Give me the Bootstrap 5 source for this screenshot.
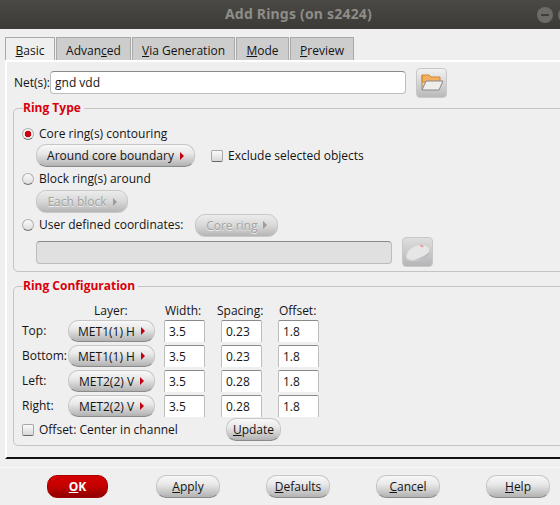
<!DOCTYPE html>
<html lang="en">
<head>
  <meta charset="UTF-8">
  <title>Add Rings (on s2424)</title>
  <meta name="viewport" content="width=device-width, initial-scale=1">
  <link href="https://cdn.jsdelivr.net/npm/bootstrap@5.3.3/dist/css/bootstrap.min.css" rel="stylesheet">
  <style>
    html, body { height: 100%; overflow: hidden; background: #efefef; }
    body { font-family: "Open Sans", "Noto Sans", sans-serif; font-size: 12px; line-height: 16px; color: #141414; }
    .win { width: 560px; height: 505px; overflow: hidden; }
    .inner { width: 597px; }
    .titlebar { height: 29px; background: linear-gradient(#4a4944, #3b3a36); color: #8e8d88; font: bold 14px/27px "Noto Sans", sans-serif; letter-spacing: .2px; text-align: center; position: relative; }
    .winbtn { position: absolute; top: 7px; width: 16px; height: 16px; border-radius: 50%; background: #6c6b66; }
    .winbtn::after { content: ""; position: absolute; left: 4px; right: 4px; top: 7px; height: 2px; background: #403f3b; }
    .tabbar { padding: 8px 0 0 5px; height: 31px; gap: 1px; border: 0; flex-wrap: nowrap; }
    .tabitem { height: 23px; padding: 5px 0 0; text-align: center; background: #cdcdcd; border: 1px solid #a9a9a9; border-bottom: 0; color: #141414; }
    .tabitem.on { background: #efefef; }
    .tabpane { margin-left: 5px; border-top: 2px solid #fff; border-left: 2px solid #fff; border-bottom: 2px solid #111; padding: 5px 0 0 6px; box-sizing: content-box; height: 390px; }
    .netrow { height: 31px; margin-bottom: 2px; }
    .netlabel { width: 37px; padding-left: 1px; }
    .netinput { width: 356px; height: 23px; }
    .field { border: 1px solid #c4c4c4; border-radius: 5px; padding: 0 0 0 8px; margin: 0; }
    .field legend { float: none; width: auto; font-size: 12px; line-height: 16px; font-weight: 700; color: #d8000c; margin: 0 0 0 1px; padding: 0 3px 0 0; }
    .typebox { height: 172px; }
    .confbox { height: 168px; margin-top: 6px; }
    .gbtn { height: 23px; padding: 0; font-size: 12px; line-height: 21px; color: #141414; border: 1px solid #c6c6c6; border-bottom-color: #8a8a8a; border-radius: 10px; background: linear-gradient(#f8f8f8, #e8e8e8 40%, #b2b2b2); display: inline-flex; align-items: center; justify-content: center; gap: 6px; }
    .gbtn:disabled { opacity: 1; color: #a2a2a2; background: linear-gradient(#ececec, #d8d8d8 50%, #b5b5b5); border-color: #c8c8c8; text-shadow: 0 1px 0 #eee; }
    .arrow { width: 0; height: 0; border-left: 4px solid #c00010; border-top: 4px solid transparent; border-bottom: 4px solid transparent; }
    .gbtn:disabled .arrow { border-left-color: #9c9c9c; }
    .okbtn { width: 62px; color: #fff; font-weight: 700; background: linear-gradient(#d40000, #c40000 50%, #8e0000); border-color: #a00; }
    .iconbtn { width: 31px; height: 30px; margin-left: 10px; border: 1px solid #c8c8c8; border-radius: 4px; background: linear-gradient(#f2f2f2, #b9b9b9); padding: 0; }
    .iconbtn.dim { background: linear-gradient(#dedede, #b5b5b5); }
    .form-check-input.tick { width: 12px; height: 12px; margin: 0; flex: none; border: 1px solid #a8a8a8; background-image: none; background-color: #e9e9e9; float: none; }
    .form-check-input.tick[type=radio] { background: linear-gradient(#fafafa, #dcdcdc); border-radius: 50%; border-color: #b0b0b0 #b0b0b0 #777; }
    .form-check-input.tick[type=radio]:checked { background: radial-gradient(circle, #c80010 0 3px, #f2f2f2 3.6px); }
    .form-check-input.tick[type=checkbox] { border-radius: 2px; background: linear-gradient(#fafafa, #d8d8d8); border-bottom-color: #666; }
    .optline { height: 22px; }
    .optline span { margin-left: 5px; }
    .indent { padding-left: 14px; }
    .nm { width: 46px; flex: none; }
    .numbox { width: 41px; height: 22px; border: 1px solid #bdbdbd; border-bottom: 0; border-top-color: #8a8a8a; border-radius: 2px 2px 0 0; background: #fff; padding: 0 4px; font-size: 12px; color: #141414; }
    .textbox { border: 1px solid #bdbdbd; border-top-color: #8a8a8a; border-radius: 4px; background: #fff; padding: 0 4px; font-size: 12px; color: #141414; }
    .cfgrow { height: 22px; margin-bottom: 3px; }
    .cfgrow .gbtn { width: 87px; height: 22px; margin-right: 9px; }
    .cfgrow .numbox { margin-right: 16px; }
    .heads { display: grid; grid-template-columns: 72px 71px 52px 62px auto; height: 17px; margin-top: 9px; }
    .footbar { border-top: 1px solid #fafafa; margin-top: 8px; padding: 7px 0 0 47px; }
    .footbar .gbtn { width: 64px; margin-right: 46px; }
    .footbar .okbtn { width: 61px; margin-right: 48px; }
  </style>
</head>
<body>
  <div class="win">
    <div class="inner">
      <div class="titlebar">Add Rings (on s2424)
        <span class="winbtn" style="left:537px"></span>
        <span class="winbtn" style="left:558px"></span>
      </div>

      <ul class="nav tabbar">
        <li class="nav-item tabitem on" style="width:50px"><u>B</u>asic</li>
        <li class="nav-item tabitem" style="width:75px">Advan<u>c</u>ed</li>
        <li class="nav-item tabitem" style="width:103px"><u>V</u>ia Generation</li>
        <li class="nav-item tabitem" style="width:53px"><u>M</u>ode</li>
        <li class="nav-item tabitem" style="width:64px"><u>P</u>review</li>
      </ul>

      <div class="tabpane">
        <div class="d-flex align-items-center netrow">
          <span class="netlabel">Net(s):</span>
          <input class="textbox netinput" value="gnd vdd">
          <button class="iconbtn">
            <svg width="26" height="22" viewBox="0 0 26 22">
              <path d="M3 3h7l2 2h9v5H3z" fill="#f2b060" stroke="#d08a30"/>
              <path d="M3 3v15" stroke="#d08a30" fill="none"/>
              <path d="M7 9h17l-4 9H3z" fill="#f0eeea" stroke="#8a8a8a"/>
            </svg>
          </button>
        </div>

        <fieldset class="field typebox">
          <legend>Ring Type</legend>
          <div class="d-flex align-items-center optline" style="margin-top:7px">
            <input class="form-check-input tick" type="radio" name="ring" checked>
            <span>Core ring(s) contouring</span>
          </div>
          <div class="d-flex align-items-center indent" style="margin-top:-1px">
            <button class="btn gbtn" style="width:159px">Around core boundary <i class="arrow"></i></button>
            <input class="form-check-input tick" style="margin-left:16px" type="checkbox">
            <span style="margin-left:5px">Exclude selected objects</span>
          </div>
          <div class="d-flex align-items-center optline" style="margin-top:1px">
            <input class="form-check-input tick" type="radio" name="ring">
            <span>Block ring(s) around</span>
          </div>
          <div class="indent" style="height:23px">
            <button class="btn gbtn" style="width:92px" disabled>Each block <i class="arrow"></i></button>
          </div>
          <div class="d-flex align-items-center optline" style="height:24px">
            <input class="form-check-input tick" type="radio" name="ring">
            <span>User defined coordinates:</span>
            <button class="btn gbtn" style="width:83px;margin-left:12px" disabled>Core ring <i class="arrow"></i></button>
          </div>
          <div class="d-flex align-items-center indent">
            <input class="textbox" style="width:356px;height:23px;background:#e0e0e0" disabled>
            <button class="iconbtn dim" disabled>
              <svg width="28" height="24" viewBox="0 0 26 22">
                <path d="M2 15c0-6 7-11 14-11 5 0 8 2 8 5 0 6-9 10-15 10-4 0-7-1-7-4z" fill="#e6e6e6" stroke="#d0d0d0"/>
                <path d="M10 18c5-1 11-4 14-8 0 5-8 9-14 8z" fill="#b4bac2"/>
                <path d="M15 5l3 1" stroke="#e99" stroke-width="1.5"/>
              </svg>
            </button>
          </div>
        </fieldset>

        <fieldset class="field confbox">
          <legend>Ring Configuration</legend>
          <div class="heads">
            <span></span>
            <span>Layer:</span>
            <span>Width:</span>
            <span>Spacing:</span>
            <span>Offset:</span>
          </div>
          <div id="cfgRows"></div>
          <div class="d-flex align-items-center" style="margin-top:-2px">
            <input class="form-check-input tick" type="checkbox">
            <span style="margin-left:5px;width:187px">Offset: Center in channel</span>
            <button class="btn gbtn" style="width:55px"><span><u>U</u>pdate</span></button>
          </div>
        </fieldset>
      </div>

      <div class="footbar d-flex">
        <button class="btn gbtn okbtn"><span><u>O</u>K</span></button>
        <button class="btn gbtn"><span><u>A</u>pply</span></button>
        <button class="btn gbtn"><span><u>D</u>efaults</span></button>
        <button class="btn gbtn"><span><u>C</u>ancel</span></button>
        <button class="btn gbtn"><span><u>H</u>elp</span></button>
      </div>
    </div>
  </div>

  <script>
    const rows = [
      ["Top:", "MET1(1) H", "0.23"],
      ["Bottom:", "MET1(1) H", "0.23"],
      ["Left:", "MET2(2) V", "0.28"],
      ["Right:", "MET2(2) V", "0.28"]
    ];
    document.getElementById("cfgRows").innerHTML = rows.map(r => `
      <div class="d-flex align-items-center cfgrow">
        <span class="nm">${r[0]}</span>
        <button class="btn gbtn">${r[1]} <i class="arrow"></i></button>
        <input class="numbox" value="3.5">
        <input class="numbox" value="${r[2]}">
        <input class="numbox" value="1.8">
      </div>`).join("");
  </script>
</body>
</html>
